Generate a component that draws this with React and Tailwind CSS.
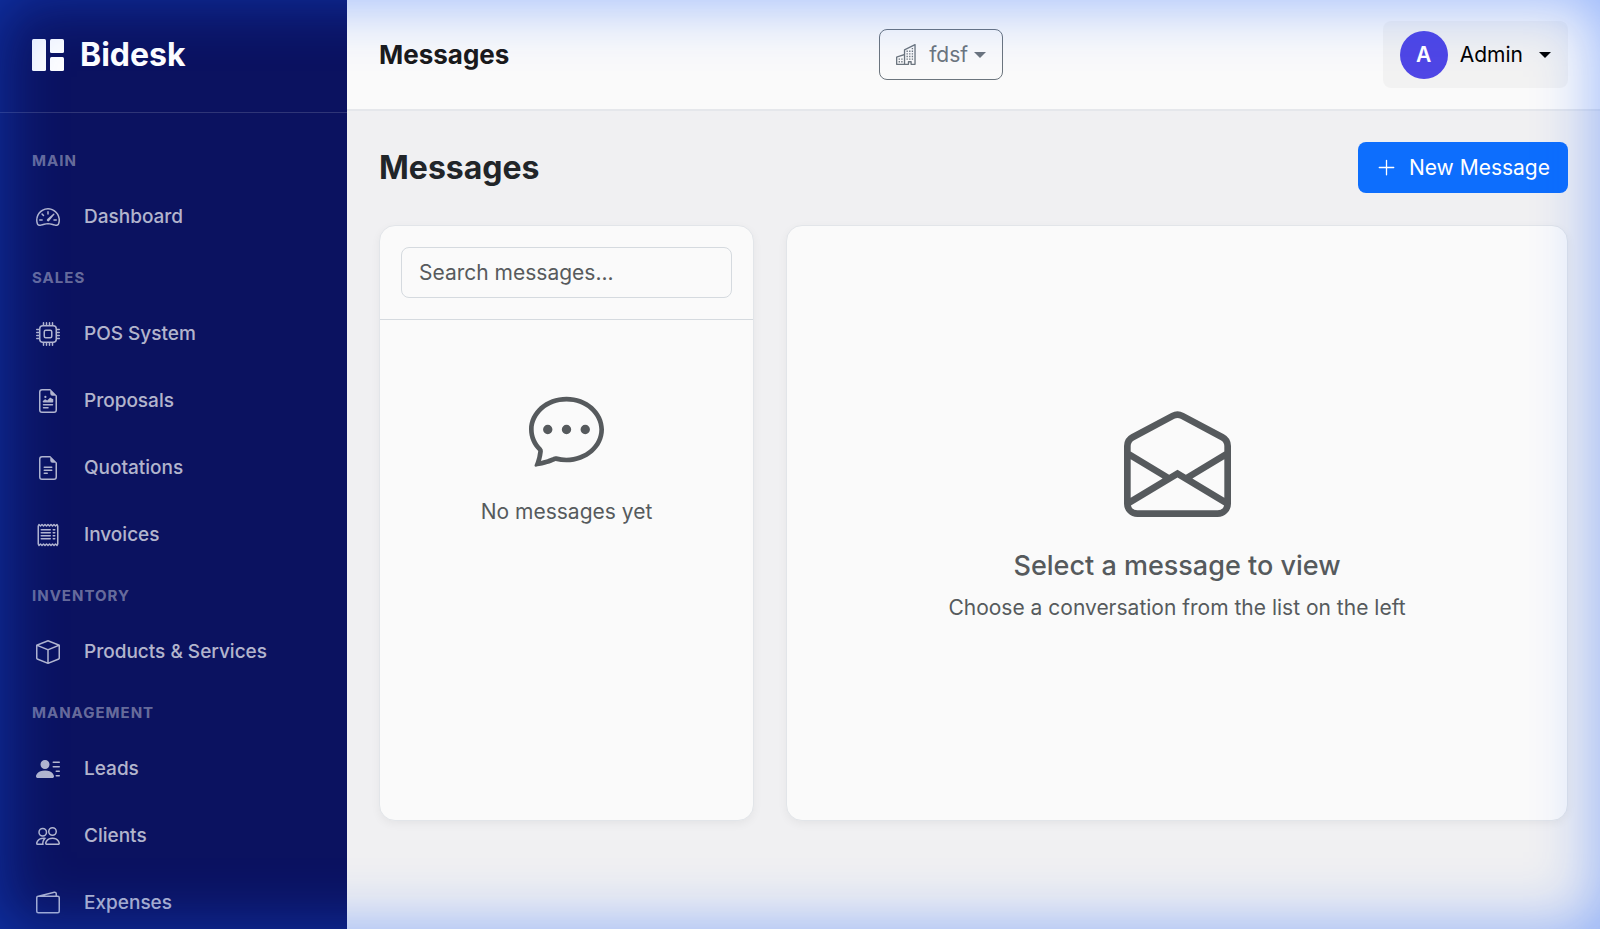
import { useState } from "react";
import {
  BsBox,
  BsBuildings,
  BsChatDots,
  BsCpu,
  BsEnvelopeOpen,
  BsFileEarmarkRichtext,
  BsFileEarmarkText,
  BsPeople,
  BsPersonLinesFill,
  BsPlusLg,
  BsReceipt,
  BsSpeedometer2,
  BsWallet2,
} from "react-icons/bs";

const sections = [
  {
    title: "Main",
    items: [{ label: "Dashboard", icon: BsSpeedometer2 }],
  },
  {
    title: "Sales",
    items: [
      { label: "POS System", icon: BsCpu },
      { label: "Proposals", icon: BsFileEarmarkRichtext },
      { label: "Quotations", icon: BsFileEarmarkText },
      { label: "Invoices", icon: BsReceipt },
    ],
  },
  {
    title: "Inventory",
    items: [{ label: "Products & Services", icon: BsBox }],
  },
  {
    title: "Management",
    items: [
      { label: "Leads", icon: BsPersonLinesFill },
      { label: "Clients", icon: BsPeople },
      { label: "Expenses", icon: BsWallet2 },
    ],
  },
];

function Logo() {
  return (
    <svg viewBox="0 0 32 32" className="size-8" fill="white" aria-hidden="true">
      <rect x="0" y="0" width="14" height="32" rx="1.5" />
      <rect x="18" y="0" width="14" height="14" rx="1.5" />
      <rect x="18" y="18" width="14" height="14" rx="1.5" />
    </svg>
  );
}

function Caret() {
  return (
    <svg viewBox="0 0 12 6" className="h-1.5 w-3" fill="currentColor" aria-hidden="true">
      <path d="M0 0h12L6 6z" />
    </svg>
  );
}

function Sidebar() {
  return (
    <aside className="sticky top-0 h-screen w-[347px] shrink-0 overflow-hidden bg-[#0b1260] text-white">
      <div className="flex h-[113px] items-center gap-4 border-b border-white/15 px-8 pb-0.5">
        <Logo />
        <span className="text-[32px] font-bold">Bidesk</span>
      </div>

      <nav className="pt-5">
        {sections.map((section) => (
          <div key={section.title}>
            <h2 className="px-8 pt-4 pb-2.5 text-[15px] leading-6 font-bold tracking-[1px] text-white/40 uppercase">
              {section.title}
            </h2>
            <ul>
              {section.items.map(({ label, icon: Icon }) => (
                <li key={label}>
                  <a
                    href="#"
                    className="flex h-[67px] items-center gap-5 px-8 text-[19px] leading-[31px] font-medium text-white/70"
                  >
                    <span className="flex w-8 justify-center">
                      <Icon className="size-6" />
                    </span>
                    {label}
                  </a>
                </li>
              ))}
            </ul>
          </div>
        ))}
      </nav>
    </aside>
  );
}

function Header() {
  return (
    <header className="flex h-[111px] items-center justify-between border-b-2 border-[#e5e7eb] bg-[#fafafa] px-8">
      <h1 className="text-[26px] font-bold text-[#1a1a1a]">Messages</h1>

      <button
        type="button"
        className="mr-2.5 flex h-[51px] items-center rounded-lg border border-[#6c757d] px-4 text-[21px] text-[#6c757d]"
      >
        <BsBuildings className="mr-3 size-[21px]" />
        fdsf
        <span className="ml-1.5">
          <Caret />
        </span>
      </button>

      <button
        type="button"
        className="flex h-[67px] items-center rounded-lg bg-black/3 px-[17px] text-[21px] text-black"
      >
        <span className="mr-3 flex size-12 items-center justify-center rounded-full bg-[#4f46e5] font-semibold text-white">
          A
        </span>
        Admin
        <span className="ml-4">
          <Caret />
        </span>
      </button>
    </header>
  );
}

function MessageList() {
  const [search, setSearch] = useState("");

  return (
    <section className="rounded-2xl border border-[#e2e5e9] bg-[#fafafa] shadow-[0_3px_10px_rgba(0,0,0,0.05)]">
      <div className="border-b border-[#d5dadf] p-[21px]">
        <input
          type="text"
          aria-label="Search messages"
          placeholder="Search messages..."
          value={search}
          onChange={(e) => setSearch(e.target.value)}
          className="h-[51px] w-full rounded-lg border border-[#d5dadf] bg-transparent px-[17px] text-[21px] text-[#212529] placeholder:text-[#575a5d]"
        />
      </div>
      <div className="flex flex-col items-center px-4 pt-[72px] text-[#565a5d]">
        <BsChatDots className="size-[75px]" />
        <p className="mt-[29px] text-[21px] leading-8">No messages yet</p>
      </div>
    </section>
  );
}

function MessageView() {
  return (
    <section className="flex flex-col items-center justify-center rounded-2xl border border-[#e2e5e9] bg-[#fafafa] px-4 pb-3 text-[#565a5d] shadow-[0_3px_10px_rgba(0,0,0,0.05)]">
      <BsEnvelopeOpen className="size-[107px]" />
      <h3 className="mt-[33px] text-[27px] leading-8 font-medium">
        Select a message to view
      </h3>
      <p className="mt-2.5 text-[21px] leading-8">
        Choose a conversation from the list on the left
      </p>
    </section>
  );
}

export default function App() {
  return (
    <div className="flex min-h-screen bg-[#f0f0f2] font-[Inter,sans-serif]">
      <Sidebar />

      <div className="flex min-w-0 flex-1 flex-col">
        <Header />

        <main className="flex flex-1 flex-col px-8 pt-[31px] pb-[108px]">
          <div className="mb-8 flex h-[51px] items-center justify-between">
            <h2 className="text-[32px] font-bold text-[#212529]">Messages</h2>
            <button
              type="button"
              className="flex h-[51px] items-center gap-3 rounded-lg bg-[#0d6efd] px-[18px] text-[21px] text-white"
            >
              <BsPlusLg className="size-[21px]" />
              New Message
            </button>
          </div>

          <div className="grid flex-1 grid-cols-[375fr_782fr] gap-8">
            <MessageList />
            <MessageView />
          </div>
        </main>
      </div>

      {/* Blue glow round the window edge */}
      <div className="pointer-events-none fixed inset-0 z-50 shadow-[inset_0_0_64px_rgba(20,92,255,0.46)]" />
    </div>
  );
}
